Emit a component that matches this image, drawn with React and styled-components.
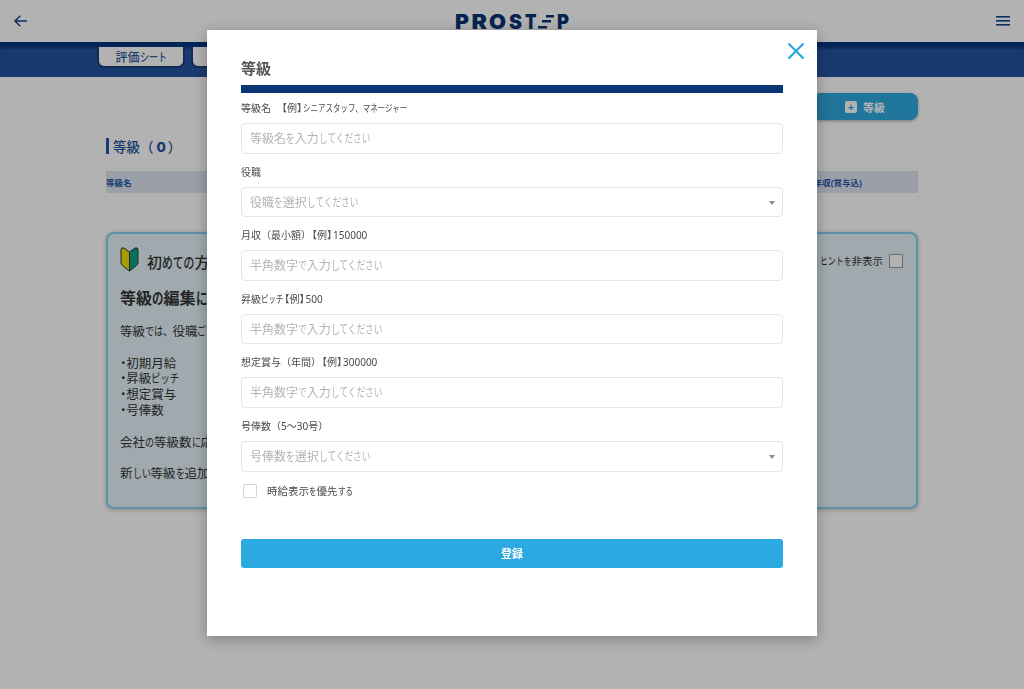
import React from 'react'
import styled, { createGlobalStyle } from 'styled-components'

const FONT = `'Noto Sans CJK JP', 'Noto Sans', sans-serif`

const GlobalStyle = createGlobalStyle`
  html, body {
    margin: 0;
    padding: 0;
    height: 100%;
    background: #fff;
    font-family: 'Noto Sans', ${FONT};
    text-spacing-trim: space-all;
  }
  * { box-sizing: border-box; }
`

const Page = styled.div`
  width: 1024px;
  height: 689px;
  overflow: hidden;
  background: #fff;
`

const Header = styled.header`
  height: 42px;
  display: flex;
  align-items: center;
  justify-content: space-between;
  padding: 0 12px;
`

const IconButton = styled.div`
  width: 18px;
  height: 18px;
  display: flex;
  align-items: center;
  justify-content: center;
  color: #13458f;
`

const Logo = styled.svg`
  display: block;
  width: 114px;
  height: 16px;
  overflow: visible;
`

const Nav = styled.nav`
  height: 35px;
  background: #2554a0;
  border-top: 5px solid #03357f;
  box-shadow: inset 0 2px 2px rgba(0, 30, 90, 0.4);
  display: flex;
  gap: 6px;
  padding-left: 97px;
`

const Tab = styled.div`
  width: 88px;
  height: 21px;
  background: #fff;
  border: 2px solid #1b3f7c;
  border-top: none;
  border-radius: 0 0 7px 7px;
  color: #2f5a9a;
  font-size: 12px;
  font-weight: 500;
  display: flex;
  align-items: center;
  justify-content: center;
`

const Content = styled.main`
  padding: 16px 106px 0;
`

const Actions = styled.div`
  display: flex;
  justify-content: flex-end;
`

const AddButton = styled.div`
  width: 106px;
  height: 27px;
  border-radius: 8px;
  background: #2fa8de;
  color: #fff;
  font-size: 11px;
  font-weight: 700;
  display: flex;
  align-items: center;
  justify-content: center;
  gap: 6px;
  box-shadow: 0 1px 3px rgba(0, 0, 0, 0.35);
`

const PlusBox = styled.span`
  width: 12px;
  height: 12px;
  border-radius: 2px;
  background: #fff;
  color: #2fa8de;
  font-size: 11px;
  line-height: 11px;
  text-align: center;
`

const SectionTitle = styled.h2`
  margin: 18px 0 0;
  height: 16px;
  border-left: 3px solid #1f56a8;
  padding-left: 4px;
  color: #2554a0;
  font-size: 13.5px;
  font-weight: 500;
  line-height: 18px;
  display: flex;
`

const Count = styled.b`
  font-family: 'Inter', sans-serif;
  font-weight: 800;
  margin: 0 2px 0 3px;
`

const TableHead = styled.div`
  margin-top: 17px;
  height: 22px;
  background: #dfe4f1;
  color: #1f56a8;
  font-size: 8.5px;
  font-weight: 700;
  display: flex;
  align-items: center;
  justify-content: space-between;
  padding-right: 56px;
`

const HintCard = styled.section`
  margin-top: 39px;
  height: 277px;
  background: #e6f3fa;
  border: 2px solid #85d0f0;
  border-radius: 8px;
  box-shadow: 0 1px 4px rgba(0, 0, 0, 0.25);
  padding: 12px 13px 0 12px;
  color: #333;
  display: flex;
  flex-direction: column;
`

const HintHead = styled.div`
  display: flex;
  align-items: center;
  justify-content: space-between;
`

const HintTitle = styled.div`
  display: flex;
  align-items: center;
  gap: 8px;
  font-size: 15px;
  font-weight: 500;
`

const HintTitleText = styled.span`
  padding-top: 4px;
`

const HintToggle = styled.div`
  display: flex;
  align-items: center;
  gap: 6px;
  font-size: 10.5px;
  padding-top: 3px;
`

const HintBox = styled.span`
  width: 14px;
  height: 14px;
  background: #fff;
  border: 1.5px solid #999;
  border-radius: 1px;
`

const HintHeading = styled.h3`
  margin: 15px 0 0;
  font-size: 16px;
  font-weight: 700;
  line-height: 22px;
`

const HintText = styled.div`
  margin-top: 15px;
  font-size: 12.5px;
  line-height: 15.8px;
  white-space: pre-line;
`

const Overlay = styled.div`
  position: fixed;
  inset: 0;
  background: rgba(0, 0, 0, 0.3);
  display: flex;
  justify-content: center;
  align-items: flex-start;
  padding-top: 30px;
`

const Modal = styled.div`
  position: relative;
  width: 610px;
  height: 606px;
  background: #fff;
  padding: 22px 34px 0;
  box-shadow: 0 3px 14px rgba(0, 0, 0, 0.3);
  color: #4a4a4a;
`

const CloseButton = styled.div`
  position: absolute;
  top: 10px;
  right: 10px;
  width: 22px;
  height: 22px;
  color: #2ca9e1;
`

const ModalTitle = styled.h1`
  margin: 0;
  height: 33px;
  font-size: 15px;
  font-weight: 700;
  line-height: 32px;
  color: #555;
`

const TitleRule = styled.div`
  height: 8px;
  background: #0a3474;
`

const Form = styled.form`
  display: flex;
  flex-direction: column;
  gap: 9px;
  margin-top: 6px;
`

const Field = styled.div`
  display: flex;
  flex-direction: column;
`

const Label = styled.label`
  height: 19px;
  font-size: 10px;
  line-height: 19px;
  color: #4a4a4a;
  margin-bottom: 5px;
  white-space: pre;
`

const Control = styled.div`
  position: relative;
  height: 30.6px;
  border: 1px solid #e6e6e6;
  border-radius: 4px;
  padding-left: 8px;
  font-size: 12px;
  line-height: 30px;
  color: #b4b4b4;
`

const Caret = styled.span`
  position: absolute;
  right: 7px;
  top: 13px;
  border-left: 3.5px solid transparent;
  border-right: 3.5px solid transparent;
  border-top: 4px solid #8a8a8a;
`

const CheckRow = styled.div`
  display: flex;
  align-items: center;
  gap: 10px;
  height: 20px;
  padding-left: 2px;
  font-size: 10.5px;
  color: #4a4a4a;
`

const CheckBox = styled.span`
  width: 14px;
  height: 14px;
  border: 1.5px solid #d4d4d4;
  border-radius: 2px;
`

const Submit = styled.div`
  margin-top: 38px;
  height: 29px;
  border-radius: 3px;
  background: #2ca9e1;
  color: #fff;
  font-size: 11px;
  font-weight: 700;
  display: flex;
  align-items: center;
  justify-content: center;
`

// the original font has narrow kana and brackets next to full-width kanji
const Squeeze = styled.span`
  display: inline-block;
  white-space: pre;
  transform: scaleX(${props => props.$scale});
  transform-origin: left center;
  margin-right: ${props => -props.$count * (1 - props.$scale)}em;
`

const OpenBracket = styled.span`
  margin-left: -0.4em;
`

const CloseBracket = styled.span`
  margin-right: -0.4em;
`

const Dot = styled.span`
  margin: 0 -0.25em;
`

const HIRA = /^[\u3041-\u309f]/
const KATA = /^[\u30a1-\u30fa\u30fc-\u30ff、]/
const RUNS = /([\u3041-\u309f]+|[\u30a1-\u30fa\u30fc-\u30ff、]+|[【】]|・)/

const Jp = ({ children }) =>
  children.split(RUNS).map((run, i) => {
    if (HIRA.test(run)) return <Squeeze key={i} $scale={0.72} $count={run.length}>{run}</Squeeze>
    if (KATA.test(run)) return <Squeeze key={i} $scale={0.75} $count={run.length}>{run}</Squeeze>
    if (run === '【') return <OpenBracket key={i}>{run}</OpenBracket>
    if (run === '】') return <CloseBracket key={i}>{run}</CloseBracket>
    if (run === '・') return <Dot key={i}>{run}</Dot>
    return run
  })

const BeginnerMark = () => (
  <svg width='19' height='26' viewBox='0 0 19 26'>
    <path d='M1 4 Q1 1 4 2 L9.5 6 V25 L2.5 19.5 Q1 18.5 1 16 Z' fill='#f0e000' stroke='#333' strokeWidth='1' />
    <path d='M18 4 Q18 1 15 2 L9.5 6 V25 L16.5 19.5 Q18 18.5 18 16 Z' fill='#0aa38c' stroke='#333' strokeWidth='1' />
  </svg>
)

const logoText = {
  fontFamily: "'Inter', sans-serif",
  fontWeight: 900,
  fontSize: 20,
  y: 15.5,
  lengthAdjust: 'spacingAndGlyphs'
}

const LogoMark = () => (
  <Logo viewBox='0 0 114 16' fill='#0a3474'>
    <text x='0' textLength='14' {...logoText}>P</text>
    <text x='16.5' textLength='15.5' {...logoText}>R</text>
    <text x='34' textLength='17' {...logoText}>O</text>
    <text x='54' textLength='13' {...logoText}>S</text>
    <text x='70' textLength='11.5' {...logoText}>T</text>
    <rect x='91' y='2' width='8' height='2.5' />
    <rect x='87' y='7' width='9' height='2.5' />
    <rect x='83' y='13' width='9' height='2.5' />
    <text x='102' textLength='12' {...logoText}>P</text>
  </Logo>
)

const fields = [
  { label: '等級名　【例】シニアスタッフ、マネージャー', placeholder: '等級名を入力してください' },
  { label: '役職', placeholder: '役職を選択してください', select: true },
  { label: '月収（最小額）【例】150000', placeholder: '半角数字で入力してください' },
  { label: '昇級ピッチ【例】500', placeholder: '半角数字で入力してください' },
  { label: '想定賞与（年間）【例】300000', placeholder: '半角数字で入力してください' },
  { label: '号俸数（5～30号）', placeholder: '号俸数を選択してください', select: true }
]

const hintBody = `等級では、役職ごとの

・初期月給
・昇級ピッチ
・想定賞与
・号俸数

会社の等級数に応じて設定します

新しい等級を追加してください`

const App = () => {
  return (
    <Page>
      <GlobalStyle />
      <Header>
        <IconButton>
          <svg width='18' height='18' viewBox='0 0 24 24' fill='none' stroke='currentColor' strokeWidth='2'>
            <path d='M20 12H4.5M11 5l-7 7 7 7' />
          </svg>
        </IconButton>
        <LogoMark />
        <IconButton>
          <svg width='14' height='12' viewBox='0 0 14 12' fill='currentColor'>
            <rect y='1' width='14' height='1.6' />
            <rect y='5' width='14' height='1.6' />
            <rect y='9' width='14' height='1.6' />
          </svg>
        </IconButton>
      </Header>
      <Nav>
        <Tab><span><Jp>評価シート</Jp></span></Tab>
        <Tab>等級</Tab>
      </Nav>
      <Content>
        <Actions>
          <AddButton><PlusBox>+</PlusBox>等級</AddButton>
        </Actions>
        <SectionTitle>等級（<Count>0</Count>）</SectionTitle>
        <TableHead>
          <span>等級名</span>
          <span>年収(賞与込)</span>
        </TableHead>
        <HintCard>
          <HintHead>
            <HintTitle><BeginnerMark /><HintTitleText><Jp>初めての方へ</Jp></HintTitleText></HintTitle>
            <HintToggle><span><Jp>ヒントを非表示</Jp></span><HintBox /></HintToggle>
          </HintHead>
          <HintHeading><Jp>等級の編集について</Jp></HintHeading>
          <HintText><Jp>{hintBody}</Jp></HintText>
        </HintCard>
      </Content>
      <Overlay>
        <Modal>
          <CloseButton>
            <svg width='22' height='22' viewBox='0 0 22 22' fill='none' stroke='currentColor' strokeWidth='2.2'>
              <path d='M3.5 3.5l15 15M18.5 3.5l-15 15' />
            </svg>
          </CloseButton>
          <ModalTitle>等級</ModalTitle>
          <TitleRule />
          <Form>
            {fields.map((field, i) => (
              <Field key={i}>
                <Label><Jp>{field.label}</Jp></Label>
                <Control>
                  <Jp>{field.placeholder}</Jp>
                  {field.select && <Caret />}
                </Control>
              </Field>
            ))}
            <CheckRow><CheckBox /><span><Jp>時給表示を優先する</Jp></span></CheckRow>
          </Form>
          <Submit>登録</Submit>
        </Modal>
      </Overlay>
    </Page>
  )
}

export default App
